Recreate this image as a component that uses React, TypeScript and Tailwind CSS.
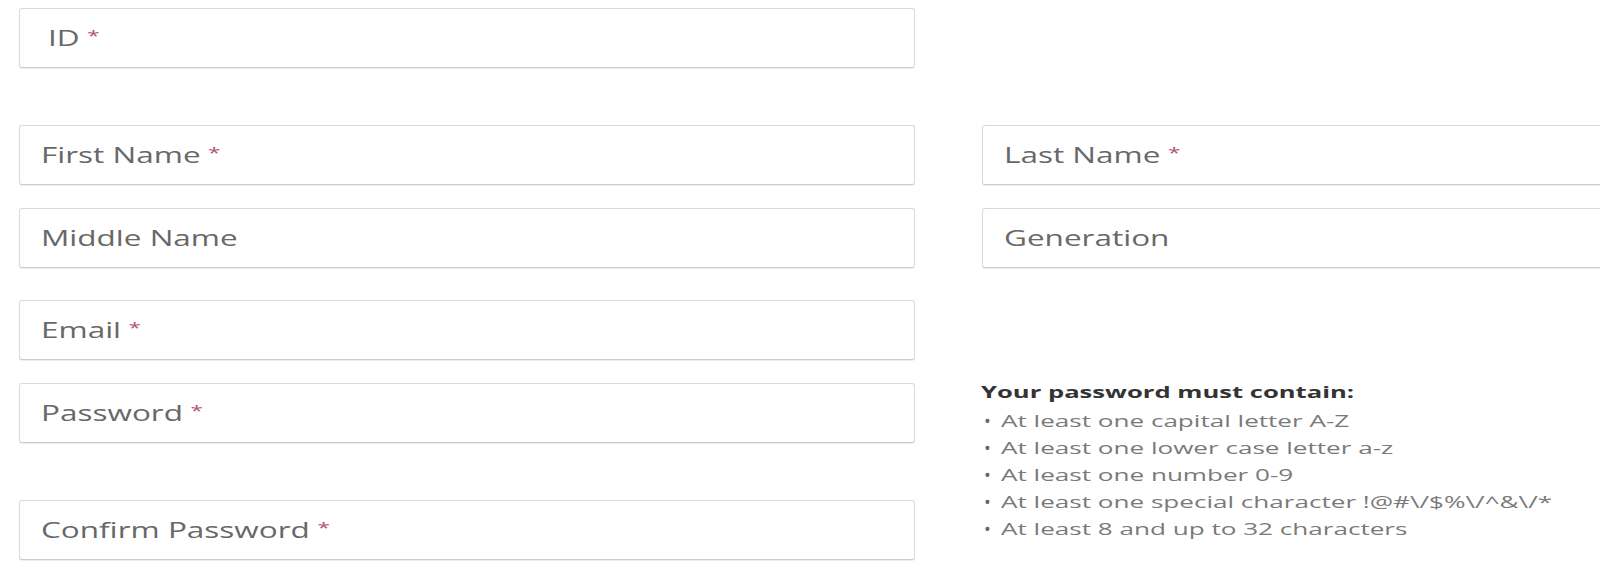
const rules = [
  'At least one capital letter A-Z',
  'At least one lower case letter a-z',
  'At least one number 0-9',
  'At least one special character !@#\\/$%\\/^&\\/*',
  'At least 8 and up to 32 characters',
];

function Field({ label, required, indent }: { label: string; required?: boolean; indent?: boolean }) {
  return (
    <div
      className={`h-[60px] w-[896px] shrink-0 bg-white border border-[#dadada] border-b-[#cccccc] rounded-[3px] shadow-[0_1px_1px_rgba(0,0,0,0.07)] flex items-center ${
        indent ? 'pl-[28px]' : 'pl-[21px]'
      }`}
    >
      <span className="inline-block origin-left scale-x-150 text-[21px] leading-none text-[#686868] whitespace-nowrap">
        {label}
        {required && <span className="text-[#b4506e] text-[15px] align-[5px] ml-[5px]">*</span>}
      </span>
    </div>
  );
}

export default function App() {
  return (
    <div className="w-[1600px] h-[566px] overflow-hidden bg-white font-['Open_Sans',sans-serif]">
      <div className="pl-[19px] pt-[8px]">
        <Field label="ID" required indent />

        <div className="mt-[57px] flex gap-[67px]">
          <Field label="First Name" required />
          <Field label="Last Name" required />
        </div>
        <div className="mt-[23px] flex gap-[67px]">
          <Field label="Middle Name" />
          <Field label="Generation" />
        </div>

        <div className="mt-[32px] flex gap-[66px]">
          <div className="flex flex-col">
            <Field label="Email" required />
            <div className="mt-[23px]">
              <Field label="Password" required />
            </div>
            <div className="mt-[57px]">
              <Field label="Confirm Password" required />
            </div>
          </div>

          {/* password rules */}
          <div className="pt-[80px]">
            <p className="inline-block origin-left scale-x-[1.6] text-[16px] leading-[20px] font-bold text-[#333333] whitespace-nowrap">
              Your password must contain:
            </p>
            <ul className="mt-[3px]">
              {rules.map((rule) => (
                <li key={rule} className="h-[27px] flex items-center text-[16px] text-[#7a7a7a] whitespace-nowrap">
                  <span className="w-[20px] pl-[3px] text-[18px] leading-none text-[#666666]">•</span>
                  <span className="inline-block origin-left scale-x-[1.63]">{rule}</span>
                </li>
              ))}
            </ul>
          </div>
        </div>
      </div>
    </div>
  );
}
